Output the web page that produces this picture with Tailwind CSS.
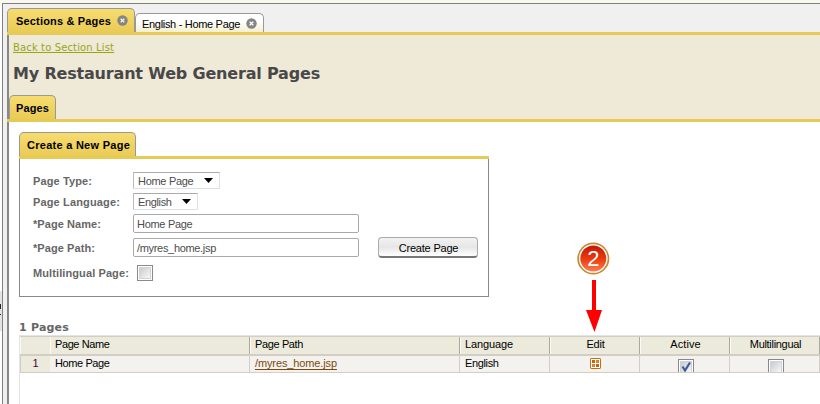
<!DOCTYPE html>
<html lang="en">
<head>
<meta charset="utf-8">
<title>Sections &amp; Pages</title>
<script src="https://cdn.jsdelivr.net/npm/@tailwindcss/browser@4"></script>
</head>
<body class="relative flex h-[404px] w-[820px] flex-col overflow-hidden bg-white font-['Liberation_Sans',Arial,sans-serif] text-[11px] leading-[14px] text-black">
<div class="h-[3px] shrink-0 bg-[#f8f8ec]"></div>
<div class="flex min-h-0 flex-1">
  <div class="flex w-[2px] shrink-0 flex-col bg-white pt-[288px]">
    <div class="flex h-10 flex-col items-start bg-[#e3e3e3] pt-[13px]">
      <div class="h-[5px] w-px bg-[#222]"></div>
      <div class="mt-[5px] h-px w-px bg-[#222]"></div>
    </div>
  </div>

  <div class="flex min-w-0 flex-1 flex-col border-l border-t border-[#808080] bg-[#f0f0f0] pl-1">
    <!-- window tabs -->
    <div class="flex h-[28px] shrink-0 items-end">
      <div class="flex h-6 w-[128px] items-center rounded-t-[5px] border border-b-0 border-[#999] bg-linear-to-b from-[#f7dc6f] to-[#e9cb55] pl-2 font-bold">
        <span class="w-[101px] whitespace-nowrap tracking-[0.17px]">Sections &amp; Pages</span>
        <svg class="size-[11px]" viewBox="0 0 11 11"><circle cx="5.5" cy="5.5" r="5.2" fill="#858585"/><path d="M3.7 3.7l3.6 3.6M7.3 3.7L3.7 7.3" stroke="#f7f3dc" stroke-width="1.3"/></svg>
      </div>
      <div class="flex h-[19px] w-[129px] items-center rounded-t-[5px] border border-b-0 border-[#999] bg-linear-to-b from-white from-40% to-[#f3efd0] pl-[6px] pt-[2px]">
        <span class="w-[104px] whitespace-nowrap tracking-[-0.31px]">English - Home Page</span>
        <svg class="mb-px size-[11px]" viewBox="0 0 11 11"><circle cx="5.5" cy="5.5" r="5.2" fill="#858585"/><path d="M3.7 3.7l3.6 3.6M7.3 3.7L3.7 7.3" stroke="#fff" stroke-width="1.3"/></svg>
      </div>
    </div>

    <div class="flex min-h-0 flex-1 flex-col">
      <!-- page header -->
      <div class="h-[3px] shrink-0 bg-[#e6ca55]"></div>
      <div class="flex h-[84px] shrink-0 flex-col border-l-2 border-[#888] bg-[#efe9d7] pl-1">
        <a class="mt-[6px] w-[101px] whitespace-nowrap font-['DejaVu_Sans',Verdana,sans-serif] text-[10px] leading-[13px] tracking-[0.13px] text-[#97a714] underline">Back to Section List</a>
        <h1 class="mt-[10px] whitespace-nowrap font-['DejaVu_Sans',Verdana,sans-serif] text-[16px] leading-5 font-bold tracking-[-0.18px] text-[#484848]">My Restaurant Web General Pages</h1>
        <div class="mt-auto -ml-1 flex h-[24px] w-[47px] items-center rounded-t-[5px] border border-b-0 border-[#999] bg-linear-to-b from-[#f7dc6f] to-[#e9cb55] pl-[6px] font-bold tracking-[0.12px]">Pages</div>
      </div>
      <div class="h-[3px] shrink-0 bg-[#e6ca55]"></div>

      <div class="flex min-h-0 flex-1 flex-col border-l-2 border-[#888] bg-white pl-[10px] pt-[10px]">
        <!-- creation form -->
        <div class="flex h-[24px] w-[117px] shrink-0 items-center rounded-t-[5px] border border-b-0 border-[#999] bg-linear-to-b from-[#f7dc6f] to-[#e9cb55] pl-[7px] pt-px font-bold tracking-[0.27px]"><span class="whitespace-nowrap">Create a New Page</span></div>
        <div class="h-[3px] w-[470px] shrink-0 bg-[#e6ca55]"></div>
        <form class="flex h-[138px] w-[470px] shrink-0 flex-col border border-t-0 border-[#888] pl-[13px] pt-[13px] text-[#4c4c4c]">
          <div class="flex h-[17px] items-center">
            <label class="w-[100px] font-bold tracking-[0.11px] text-[#666]">Page Type:</label>
            <div class="flex h-[17px] w-[87px] items-center rounded-[1px] border border-[#dfdfe8] border-t-[#aaa] border-l-[#bbb] bg-white pl-1">
              <span class="w-[66px] tracking-[-0.3px]">Home Page</span>
              <svg class="h-[5px] w-[9px]" viewBox="0 0 9 5"><path d="M0 0h9L4.5 5z" fill="#000"/></svg>
            </div>
          </div>
          <div class="mt-1 flex h-[17px] items-center">
            <label class="w-[100px] font-bold tracking-[0.15px] text-[#666]">Page Language:</label>
            <div class="flex h-[17px] w-[65px] items-center rounded-[1px] border border-[#dfdfe8] border-t-[#aaa] border-l-[#bbb] bg-white pl-1">
              <span class="w-[44px] tracking-[-0.35px]">English</span>
              <svg class="h-[5px] w-[9px]" viewBox="0 0 9 5"><path d="M0 0h9L4.5 5z" fill="#000"/></svg>
            </div>
          </div>
          <div class="mt-1 flex h-[19px] items-center">
            <label class="w-[100px] font-bold tracking-[0.07px] text-[#666]">*Page Name:</label>
            <div class="flex h-[19px] w-[226px] items-center rounded-[2px] border border-[#a9a9a9] bg-white pl-[3px] pt-px tracking-[-0.3px]">Home Page</div>
          </div>
          <div class="mt-1 flex h-[21px] items-center">
            <label class="w-[100px] font-bold tracking-[0.07px] text-[#666]">*Page Path:</label>
            <div class="flex h-[19px] w-[226px] items-center rounded-[2px] border border-[#a9a9a9] bg-white pl-[3px] pt-px tracking-[-0.32px]">/myres_home.jsp</div>
            <div class="ml-[19px] flex h-[21px] w-[100px] items-center justify-center rounded-[4px] border border-[#aaa] border-b-2 border-b-[#777] bg-linear-to-b from-[#f2f2f2] via-[#e6e6e6] via-50% to-white pl-px pt-[2px] tracking-[-0.2px] text-black">Create Page</div>
          </div>
          <div class="mt-[6px] flex h-[17px] items-center">
            <label class="w-[104px] whitespace-nowrap font-bold tracking-[0.1px] text-[#666]">Multilingual Page:</label>
            <div class="size-4 border border-[#8a8a8a] bg-white p-px"><div class="size-full border border-[#cfd2d6] bg-linear-to-br from-[#c9ccd0] to-[#f8f8f8]"></div></div>
          </div>
        </form>

        <!-- pages table -->
        <h2 class="mt-[23px] h-[15px] shrink-0 font-['DejaVu_Sans',Verdana,sans-serif] leading-[15px] font-bold tracking-[0.21px] text-[#666]">1 Pages</h2>
        <div class="flex min-h-0 flex-1 flex-col border-l border-t border-[#e4e4e4]">
          <div class="grid h-[20px] shrink-0 grid-cols-[30px_200px_210px_90px_90px_90px_90px] border-t border-b-2 border-[#d2cec5] bg-[#ebeadb] leading-[14px] [&>div]:border-r [&>div]:border-[#aaa99f] [&>div]:shadow-[inset_1px_0_#fbfaf6]">
            <div class="border-r-[#ebeadb]!"></div>
            <div class="pl-[5px] tracking-[-0.4px]">Page Name</div>
            <div class="pl-[5px] tracking-[-0.37px]">Page Path</div>
            <div class="pl-[5px] tracking-[-0.12px]">Language</div>
            <div class="pl-[2px] text-center tracking-[-0.2px]">Edit</div>
            <div class="pl-[2px] text-center tracking-[0.1px]">Active</div>
            <div class="pl-[2px] text-center tracking-[-0.3px]">Multilingual</div>
          </div>
          <div class="grid h-[17px] shrink-0 grid-cols-[30px_200px_210px_90px_90px_90px_90px] overflow-hidden border-b border-[#d2cec5] bg-[#f4f2ee] leading-[15px] [&>div]:h-[16px] [&>div]:border-r [&>div]:border-[#d2cec5]">
            <div class="border-l border-r-[#ebeadb]! bg-[#ebeadb] pl-px text-center text-[#400040]">1</div>
            <div class="pl-[5px] tracking-[-0.4px]">Home Page</div>
            <div class="pl-[5px] tracking-[-0.12px] text-[#7a4a0c]"><a class="underline underline-offset-2">/myres_home.jsp</a></div>
            <div class="pl-[5px] tracking-[-0.35px]">English</div>
            <div class="flex justify-center pl-[2px] pt-[2px]">
              <svg class="size-[11px]" viewBox="0 0 11 11"><rect x=".5" y=".5" width="10" height="10" rx=".6" fill="#fff" stroke="#cc6a0a"/><path d="M2 2h3v3H2zM6 6h3v3H6z" fill="#c86400"/><path d="M6 2h3v3H6zM2 6h3v3H2z" fill="#cf8238"/></svg>
            </div>
            <div class="flex justify-center pl-[3px] pt-[3px]">
              <svg class="h-[16px] w-[16px] shrink-0" viewBox="0 0 16 16"><defs><linearGradient id="cb" x1="0" y1="0" x2="1" y2="1"><stop offset="0" stop-color="#c4c8ce"/><stop offset="1" stop-color="#fafafa"/></linearGradient></defs><rect x=".5" y=".5" width="15" height="15" fill="#fff" stroke="#888"/><rect x="2.5" y="2.5" width="11" height="11" fill="url(#cb)" stroke="#cfd2d6"/><path d="M4.5 7.500l2.500 4 5-8" fill="none" stroke="#3d5c9c" stroke-width="2.2"/></svg>
            </div>
            <div class="flex justify-center pl-[3px] pt-[3px]">
              <svg class="h-[16px] w-[16px] shrink-0" viewBox="0 0 16 16"><rect x=".5" y=".5" width="15" height="15" fill="#fff" stroke="#888"/><rect x="2.5" y="2.5" width="11" height="11" fill="url(#cb)" stroke="#cfd2d6"/></svg>
            </div>
          </div>
        </div>
      </div>
    </div>
  </div>
</div>

<!-- step marker pointing at the Edit column -->
<svg class="absolute left-[576px] top-[242px] h-[92px] w-[36px] font-['Liberation_Sans',Arial,sans-serif]" viewBox="0 0 36 92">
  <defs><linearGradient id="red" x1="0" y1="0" x2="0" y2="1"><stop offset="0" stop-color="#c51808"/><stop offset=".5" stop-color="#e83a0c"/><stop offset="1" stop-color="#ff7a50"/></linearGradient></defs>
  <circle cx="17.300" cy="16.500" r="15.200" fill="#fff" stroke="#c98a35" stroke-width="1.700"/>
  <circle cx="17.300" cy="16.500" r="13" fill="url(#red)"/>
  <text x="17.300" y="24" text-anchor="middle" font-size="22" fill="#fff">2</text>
  <path d="M16 38h4v30h6l-7.500 22L10 68h6z" fill="#f00"/>
</svg>
</body>
</html>
